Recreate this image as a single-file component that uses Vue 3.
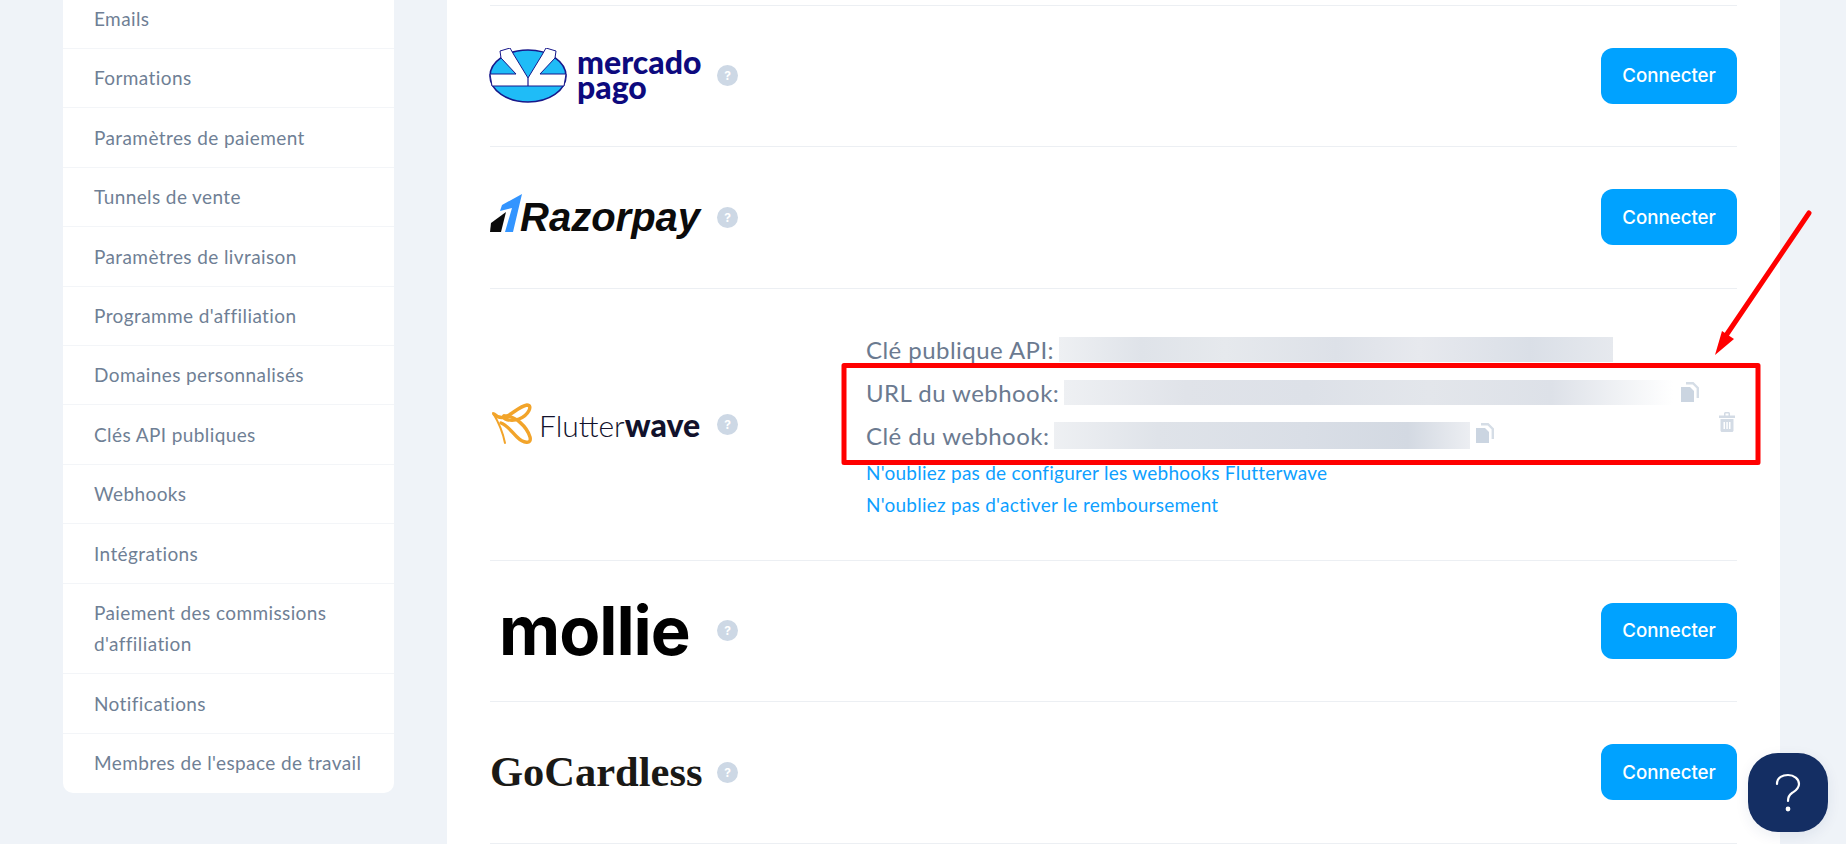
<script setup>
const nav = [
  'Emails', 'Formations', 'Paramètres de paiement', 'Tunnels de vente', 'Paramètres de livraison',
  "Programme d'affiliation", 'Domaines personnalisés', 'Clés API publiques', 'Webhooks', 'Intégrations',
  "Paiement des commissions d'affiliation", 'Notifications', "Membres de l'espace de travail"
]
</script>

<template>
  <div class="page">
    <div class="layout">
      <aside class="side">
        <a v-for="item in nav" :key="item" class="side-item">{{ item }}</a>
      </aside>
      <main class="card">
        <div class="list">
          <section class="row">
            <div class="logo">
              <svg class="mp-mark" viewBox="0 0 78 56" width="78" height="56">
                <ellipse cx="39" cy="28" rx="38" ry="26" fill="#1fbcf7" stroke="#17178a" stroke-width="1.6"/>
                <path d="M1 26 L27 26 L12 10 L11 3 L21 0 L25 7 L39 30 L53 7 L57 0 L67 3 L66 10 L51 26 L77 26 L75 38 L3 38Z" fill="#fff" stroke="#17178a" stroke-width="1" stroke-linejoin="round"/>
                <path d="M39 30 L39 38" stroke="#17178a" stroke-width="1.2"/>
              </svg>
              <div class="mp-text"><span>mercado</span><span>pago</span></div>
            </div>
            <span class="hint">?</span>
            <button class="connect">Connecter</button>
          </section>

          <section class="row">
            <div class="logo">
              <svg class="rz-mark" viewBox="0 0 34 40" width="34" height="40">
                <path d="M0 38 L1 29 L16 18 L11 38Z" fill="#0b0b0b"/>
                <path d="M10 17 L12 11 L32 0 L23 38 L15 38 L22 14Z" fill="#3395ff"/>
              </svg>
              <span class="rz-text">Razorpay</span>
            </div>
            <span class="hint">?</span>
            <button class="connect">Connecter</button>
          </section>

          <section class="row row-tall">
            <div class="logo">
              <svg class="fw-mark" viewBox="0 0 42 42" width="42" height="42" fill="none" stroke="#f2a42a" stroke-width="3.4" stroke-linecap="round">
                <path d="M2 10 C8 20 12 30 14 40" stroke-width="2"/>
                <path d="M3 11 C14 22 24 4 36 2 C42 2 38 12 28 16 C20 19 10 16 13 13"/>
                <path d="M13 13 C24 12 36 24 39 34 C41 42 32 40 26 34 C20 28 16 22 10 20"/>
              </svg>
              <span class="fw-text"><span class="fw-light">Flutter</span><b>wave</b></span>
            </div>
            <span class="hint">?</span>
            <div class="details">
              <div class="line"><span>Clé publique API:</span><i class="blur blur-api"></i></div>
              <div class="line"><span>URL du webhook:</span><i class="blur blur-url"></i>
                <svg class="copy" viewBox="0 0 18 20" width="18" height="20"><path d="M0 5h9l4 4V20H0Z" fill="#cbd5e1"/><path d="M5 1.200h7l4.800 4.800V16" fill="none" stroke="#d5dde6" stroke-width="2.400"/></svg>
              </div>
              <div class="line"><span>Clé du webhook:</span><i class="blur blur-key"></i>
                <svg class="copy" viewBox="0 0 18 20" width="18" height="20"><path d="M0 5h9l4 4V20H0Z" fill="#cbd5e1"/><path d="M5 1.200h7l4.800 4.800V16" fill="none" stroke="#d5dde6" stroke-width="2.400"/></svg>
              </div>
              <a class="link">N'oubliez pas de configurer les webhooks Flutterwave</a>
              <a class="link">N'oubliez pas d'activer le remboursement</a>
            </div>
            <svg class="trash" viewBox="0 0 16 20" width="16" height="20"><path d="M0 3.500h16v2.500H0Z M5 3.500V1.500C5 .7 5.700 0 6.500 0h3c.8 0 1.500.7 1.500 1.500v2H9.500V1.500h-3v2Z" fill="#d3dbe5"/><path fill-rule="evenodd" d="M1.500 7h13v11.500c0 .8-.7 1.500-1.500 1.500H3c-.8 0-1.500-.7-1.500-1.500Z M4.500 10v7h1.500v-7Z M7.300 10v7h1.500v-7Z M10 10v7h1.500v-7Z" fill="#d3dbe5"/></svg>
          </section>

          <section class="row">
            <div class="logo logo-mollie"><span class="mollie">mollie</span></div>
            <span class="hint">?</span>
            <button class="connect">Connecter</button>
          </section>

          <section class="row">
            <div class="logo"><span class="gc">GoCardless</span></div>
            <span class="hint">?</span>
            <button class="connect">Connecter</button>
          </section>
        </div>
      </main>
    </div>

    <svg class="annotation" viewBox="0 0 1846 844" width="1846" height="844">
      <rect x="844" y="365.500" width="914" height="97" fill="none" stroke="#ff0000" stroke-width="5" stroke-linejoin="round"/>
      <path d="M1809 213 L1725 337" stroke="#ff0000" stroke-width="5" stroke-linecap="round"/>
      <path d="M1715 355 L1722 331 L1734 339Z" fill="#ff0000"/>
    </svg>

    <button class="help" aria-label="Aide">
      <svg viewBox="0 0 28 40" width="28" height="40" fill="none" stroke="#fff" stroke-width="2.200" stroke-linecap="round">
        <path d="M3 11 C3 4 9 2 14 2 C20 2 25 6 25 11 C25 16 21 18 18 20 C15 22 14 24 14 28"/>
        <circle cx="14" cy="36" r="1.300" fill="#fff"/>
      </svg>
    </button>
  </div>
</template>

<style>
html, body { margin: 0; background: #eff3f8; }
</style>

<style scoped>
.page {
  position: relative;
  height: 844px;
  width: 1846px;
  overflow: hidden;
  background: #eff3f8;
  font-family: Lato, "Noto Sans", sans-serif;
}
.layout {
  display: flex;
  align-items: flex-start;
  padding-left: 63px;
  gap: 53px;
  margin-top: -10.500px;
}
.side {
  width: 331px;
  background: #fff;
  border-radius: 0 0 10px 10px;
  display: flex;
  flex-direction: column;
}
.side-item {
  padding: 13.500px 20px 14.500px 31px;
  font-size: 19px;
  letter-spacing: .4px;
  line-height: 31.400px;
  color: #6f7f95;
  box-shadow: inset 0 -1px 0 #f3f5f8;
}
.side-item:last-child { box-shadow: none; }
.card {
  width: 1333px;
  background: #fff;
  padding: 15px 43px 0;
  box-sizing: border-box;
  height: 900px;
}
.list { border-top: 1.500px solid #eceff3; }
.row {
  display: flex;
  align-items: center;
  height: 141.500px;
  box-sizing: border-box;
  border-bottom: 1.500px solid #eceff3;
}
.row-tall { height: 272px; }
.logo {
  width: 210px;
  flex: none;
  display: flex;
  align-items: center;
  position: relative;
}
.logo-mollie { padding-left: 9px; box-sizing: border-box; }
.mp-mark { flex: none; margin-left: -1px; }
.mp-text {
  display: flex;
  flex-direction: column;
  margin-left: 10px;
  font-family: Lato, sans-serif;
  font-weight: 900;
  font-size: 32px;
  line-height: 25px;
  color: #0d0a7e;
  margin-top: -3px;
}
.rz-mark { flex: none; margin-top: -6px; }
.rz-text {
  font-family: "Liberation Sans", sans-serif;
  font-style: italic;
  font-weight: 700;
  font-size: 40px;
  line-height: 44px;
  color: #0b0b0b;
  margin-left: -4px;
}
.fw-mark { flex: none; margin-left: 1px; }
.fw-text {
  margin-left: 6px;
  color: #12122c;
  white-space: nowrap;
}
.fw-light { font-weight: 300; font-size: 30px; }
.fw-text b { font-weight: 900; font-size: 32px; }
.mollie {
  font-family: Inter, sans-serif;
  font-weight: 700;
  font-size: 67px;
  line-height: 72px;
  color: #000;
  letter-spacing: -1px;
}
.gc {
  font-family: "Liberation Serif", serif;
  font-weight: 700;
  font-size: 42.500px;
  line-height: 48px;
  color: #1a1916;
  white-space: nowrap;
}
.hint {
  flex: none;
  width: 21px;
  height: 21px;
  margin-left: 17px;
  border-radius: 50%;
  background: #cdd8e5;
  color: #fff;
  font: 700 12px/21px Inter, sans-serif;
  text-align: center;
}
.connect {
  margin-left: auto;
  width: 136px;
  height: 56px;
  border: 0;
  border-radius: 12px;
  background: #00a2ff;
  color: #fff;
  font: 500 18.700px Inter, sans-serif;
  cursor: pointer;
}
.details {
  margin-left: 128px;
  flex: 1;
  display: flex;
  flex-direction: column;
}
.line {
  display: flex;
  align-items: center;
  height: 43px;
  font-size: 24px;
  letter-spacing: .45px;
  color: #6b7a90;
  white-space: nowrap;
}
.blur {
  display: block;
  height: 25px;
  margin-left: 5px;
  background: linear-gradient(90deg, #eef0f3 0%, #dfe3e9 15%, #e6e9ed 30%, #dde1e8 50%, #e7e9ee 65%, #dadfe7 85%, #e6e9ee 100%);
}
.blur-api { width: 554px; }
.blur-url {
  width: 609px;
  background: linear-gradient(90deg, #eef0f3 0%, #e0e3e9 20%, #dde1e8 40%, #e3e6eb 60%, #dde1e8 80%, #fff 100%);
}
.blur-key { width: 416px; height: 27px; background: linear-gradient(90deg, #eef0f3 0%, #dfe3e9 25%, #d9dee6 60%, #d3d9e2 85%, #eceef2 100%); }
.copy { flex: none; margin-left: 8px; }
.line:nth-child(3) .copy { margin-top: -4px; margin-left: 6px; }
.link {
  font-size: 19px;
  letter-spacing: .25px;
  line-height: 32px;
  color: #0e9fff;
}
.trash { flex: none; margin-right: 2px; margin-top: -4px; }
.annotation {
  position: absolute;
  left: 0;
  top: 0;
  pointer-events: none;
}
.help {
  position: fixed;
  left: 1748px;
  top: 753px;
  width: 80px;
  height: 79px;
  border: 0;
  border-radius: 30px;
  background: #142e63;
  box-shadow: 0 4px 14px rgba(20, 46, 99, .08);
  display: flex;
  align-items: center;
  justify-content: center;
  padding: 0;
}
</style>
